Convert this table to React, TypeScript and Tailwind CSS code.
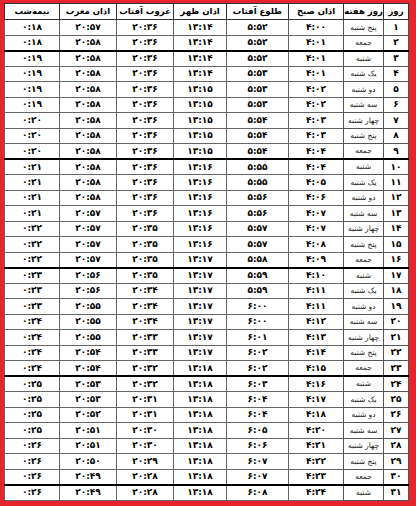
import React from 'react';

const fa = (s: string) => s.replace(/[0-9]/g, (d) => '۰۱۲۳۴۵۶۷۸۹'[Number(d)]);

const headers = ['روز', 'روز هفته', 'اذان صبح', 'طلوع آفتاب', 'اذان ظهر', 'غروب آفتاب', 'اذان مغرب', 'نیمه‌شب'];
const widths = ['w-[25px]', 'w-[40px]', 'w-[55px]', 'w-[62px]', 'w-[53px]', 'w-[57px]', 'w-[57px]', 'w-[55px]'];

const days: [string, string, string, string, string, string, string][] = [
  ['پنج شنبه', '4:00', '5:52', '13:14', '20:36', '20:57', '0:18'],
  ['جمعه', '4:01', '5:52', '13:14', '20:36', '20:58', '0:18'],
  ['شنبه', '4:01', '5:52', '13:14', '20:36', '20:58', '0:19'],
  ['یک شنبه', '4:01', '5:53', '13:14', '20:36', '20:58', '0:19'],
  ['دو شنبه', '4:02', '5:53', '13:15', '20:36', '20:58', '0:19'],
  ['سه شنبه', '4:02', '5:53', '13:15', '20:36', '20:58', '0:19'],
  ['چهار شنبه', '4:03', '5:54', '13:15', '20:36', '20:58', '0:20'],
  ['پنج شنبه', '4:03', '5:54', '13:15', '20:36', '20:58', '0:20'],
  ['جمعه', '4:04', '5:54', '13:15', '20:36', '20:58', '0:20'],
  ['شنبه', '4:04', '5:55', '13:16', '20:36', '20:58', '0:21'],
  ['یک شنبه', '4:05', '5:55', '13:16', '20:36', '20:58', '0:21'],
  ['دو شنبه', '4:06', '5:56', '13:16', '20:36', '20:58', '0:21'],
  ['سه شنبه', '4:07', '5:56', '13:16', '20:36', '20:57', '0:21'],
  ['چهار شنبه', '4:07', '5:57', '13:16', '20:35', '20:57', '0:22'],
  ['پنج شنبه', '4:08', '5:57', '13:16', '20:35', '20:57', '0:22'],
  ['جمعه', '4:09', '5:58', '13:17', '20:35', '20:57', '0:22'],
  ['شنبه', '4:10', '5:59', '13:17', '20:35', '20:56', '0:23'],
  ['یک شنبه', '4:11', '5:59', '13:17', '20:34', '20:56', '0:23'],
  ['دو شنبه', '4:11', '6:00', '13:17', '20:34', '20:55', '0:23'],
  ['سه شنبه', '4:12', '6:00', '13:17', '20:34', '20:55', '0:24'],
  ['چهار شنبه', '4:13', '6:01', '13:17', '20:33', '20:55', '0:24'],
  ['پنج شنبه', '4:14', '6:02', '13:17', '20:33', '20:54', '0:24'],
  ['جمعه', '4:15', '6:02', '13:18', '20:32', '20:54', '0:24'],
  ['شنبه', '4:16', '6:03', '13:18', '20:32', '20:53', '0:25'],
  ['یک شنبه', '4:17', '6:04', '13:18', '20:31', '20:53', '0:25'],
  ['دو شنبه', '4:18', '6:04', '13:18', '20:31', '20:52', '0:25'],
  ['سه شنبه', '4:20', '6:05', '13:18', '20:30', '20:51', '0:25'],
  ['چهار شنبه', '4:21', '6:06', '13:18', '20:30', '20:51', '0:26'],
  ['پنج شنبه', '4:22', '6:07', '13:18', '20:29', '20:50', '0:26'],
  ['جمعه', '4:23', '6:07', '13:18', '20:28', '20:49', '0:26'],
  ['شنبه', '4:24', '6:08', '13:18', '20:28', '20:49', '0:26'],
];

export default function App() {
  return (
    <div className="w-[416px] h-[506px] bg-[#e5252b] pl-[4px] pr-[8px] pt-[3px] pb-[6px]" style={{ fontFamily: '"DejaVu Sans", sans-serif' }}>
      <table dir="rtl" className="w-[404px] table-fixed border-collapse bg-white text-black">
        <thead>
          <tr className="h-[16px]">
            {headers.map((h, i) => (
              <th key={h} className={`${widths[i]} border border-[#333] p-0 text-center text-[8.5px] font-bold leading-none`}>
                {h}
              </th>
            ))}
          </tr>
        </thead>
        <tbody>
          {days.map((d, i) => {
            const top = d[0] === 'شنبه' ? 'border-t-2 border-t-black' : '';
            return (
              <tr key={i} className="h-[15.5px]">
                <td className={`border border-[#555] ${top} p-0 text-center text-[9px] font-bold leading-none`}>{fa(String(i + 1))}</td>
                <td className={`border border-[#555] ${top} p-0 text-center text-[7.5px] text-[#222] leading-none`}>{d[0]}</td>
                {d.slice(1).map((t, j) => (
                  <td key={j} className={`border border-[#666] ${top} p-0 text-center text-[9px] font-bold leading-none`}>
                    {fa(t)}
                  </td>
                ))}
              </tr>
            );
          })}
        </tbody>
      </table>
    </div>
  );
}
